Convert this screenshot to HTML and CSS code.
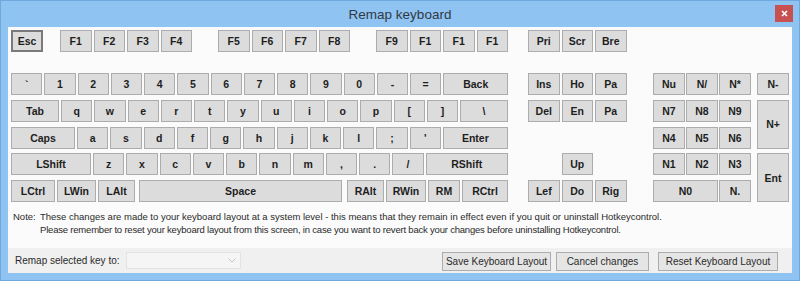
FILE: index.html
```html
<!DOCTYPE html>
<html lang="en">
<head>
  <meta charset="UTF-8">
  <title>Remap keyboard</title>
  <link rel="stylesheet" href="styles.css">
</head>
<body>
  <div class="window">
    <div class="titlebar">
      <span class="titlebar__text">Remap keyboard</span>
      <span class="titlebar__close">
        <svg width="7" height="7" viewBox="0 0 7 7"><path d="M1 1 L6 6 M6 1 L1 6" stroke="#fff" stroke-width="1.6"/></svg>
      </span>
    </div>

    <div class="content">
      <!-- Function keys -->
      <div class="fn-row">
        <div class="key key--focus">Esc</div>
        <div class="key key--fn key--gap-first">F1</div>
        <div class="key key--fn">F2</div>
        <div class="key key--fn">F3</div>
        <div class="key key--fn">F4</div>
        <div class="key key--fn key--gap-group">F5</div>
        <div class="key key--fn">F6</div>
        <div class="key key--fn">F7</div>
        <div class="key key--fn">F8</div>
        <div class="key key--fn key--gap-group">F9</div>
        <div class="key key--fn">F1</div>
        <div class="key key--fn">F1</div>
        <div class="key key--fn">F1</div>
        <div class="key key--fn key--gap-sys">Pri</div>
        <div class="key key--fn">Scr</div>
        <div class="key key--fn">Bre</div>
      </div>

      <div class="board">
        <!-- Main block -->
        <div class="block block--main">
          <div class="row">
            <div class="key">`</div>
            <div class="key">1</div>
            <div class="key">2</div>
            <div class="key">3</div>
            <div class="key">4</div>
            <div class="key">5</div>
            <div class="key">6</div>
            <div class="key">7</div>
            <div class="key">8</div>
            <div class="key">9</div>
            <div class="key">0</div>
            <div class="key">-</div>
            <div class="key">=</div>
            <div class="key key--back">Back</div>
          </div>
          <div class="row">
            <div class="key key--tab">Tab</div>
            <div class="key">q</div>
            <div class="key">w</div>
            <div class="key">e</div>
            <div class="key">r</div>
            <div class="key">t</div>
            <div class="key">y</div>
            <div class="key">u</div>
            <div class="key">i</div>
            <div class="key">o</div>
            <div class="key">p</div>
            <div class="key">[</div>
            <div class="key">]</div>
            <div class="key key--fill">\</div>
          </div>
          <div class="row">
            <div class="key key--caps">Caps</div>
            <div class="key">a</div>
            <div class="key">s</div>
            <div class="key">d</div>
            <div class="key">f</div>
            <div class="key">g</div>
            <div class="key">h</div>
            <div class="key">j</div>
            <div class="key">k</div>
            <div class="key">l</div>
            <div class="key">;</div>
            <div class="key">'</div>
            <div class="key key--fill">Enter</div>
          </div>
          <div class="row">
            <div class="key key--lshift">LShift</div>
            <div class="key">z</div>
            <div class="key">x</div>
            <div class="key">c</div>
            <div class="key">v</div>
            <div class="key">b</div>
            <div class="key">n</div>
            <div class="key">m</div>
            <div class="key">,</div>
            <div class="key">.</div>
            <div class="key">/</div>
            <div class="key key--fill">RShift</div>
          </div>
          <div class="row row--bottom">
            <div class="key key--lctrl">LCtrl</div>
            <div class="key key--lwin">LWin</div>
            <div class="key key--lalt">LAlt</div>
            <div class="key key--space">Space</div>
            <div class="key key--ralt">RAlt</div>
            <div class="key key--rwin">RWin</div>
            <div class="key key--rm">RM</div>
            <div class="key key--fill">RCtrl</div>
          </div>
        </div>

        <!-- Navigation block -->
        <div class="block block--nav">
          <div class="row">
            <div class="key key--nav">Ins</div>
            <div class="key key--nav">Ho</div>
            <div class="key key--nav">Pa</div>
          </div>
          <div class="row">
            <div class="key key--nav">Del</div>
            <div class="key key--nav">En</div>
            <div class="key key--nav">Pa</div>
          </div>
          <div class="row"></div>
          <div class="row">
            <div class="key key--nav key--up">Up</div>
          </div>
          <div class="row">
            <div class="key key--nav">Lef</div>
            <div class="key key--nav">Do</div>
            <div class="key key--nav">Rig</div>
          </div>
        </div>

        <!-- Numpad -->
        <div class="numpad">
          <div class="key">Nu</div>
          <div class="key">N/</div>
          <div class="key">N*</div>
          <div class="key">N7</div>
          <div class="key">N8</div>
          <div class="key">N9</div>
          <div class="key">N4</div>
          <div class="key">N5</div>
          <div class="key">N6</div>
          <div class="key">N1</div>
          <div class="key">N2</div>
          <div class="key">N3</div>
          <div class="key key--wide">N0</div>
          <div class="key">N.</div>
        </div>
        <div class="numpad-ops">
          <div class="key">N-</div>
          <div class="key key--tall">N+</div>
          <div class="key key--tall">Ent</div>
        </div>
      </div>

      <div class="note">
        <span class="note__label">Note:</span>
        <div class="note__text">
          <p>These changes are made to your keyboard layout at a system level - this means that they remain in effect even if you quit or uninstall Hotkeycontrol.</p>
          <p class="note__second">Please remember to reset your keyboard layout from this screen, in case you want to revert back your changes before uninstalling Hotkeycontrol.</p>
        </div>
      </div>
    </div>

    <div class="footer">
      <span class="footer__label">Remap selected key to:</span>
      <div class="combo">
        <svg width="8" height="5" viewBox="0 0 8 5"><path d="M0.5 0.5 L4 4 L7.5 0.5" fill="none" stroke="#c4c4c4" stroke-width="1"/></svg>
      </div>
      <div class="btn btn--save">Save Keyboard Layout</div>
      <div class="btn btn--cancel">Cancel changes</div>
      <div class="btn btn--reset">Reset Keyboard Layout</div>
    </div>
  </div>
</body>
</html>
```

FILE: styles.css
```css
/* Reset */
*, *::after, *::before {
  margin: 0;
  padding: 0;
  box-sizing: border-box;
}

body {
  background-color: #8fc3f2;
  font-family: "Liberation Sans", Arial, sans-serif;
  color: #222;
}

.window {
  height: 281px;
  display: flex;
  flex-direction: column;
  border: 1px solid #6fa8dc;
  background-color: #8fc3f2;
}

/* Title bar */
.titlebar {
  height: 26px;
  position: relative;
  display: flex;
  align-items: center;
  justify-content: center;
}

.titlebar__text {
  font-size: 13.5px;
  color: #2f3a45;
  padding-top: 1px;
}

.titlebar__close {
  position: absolute;
  top: 4px;
  right: 6px;
  width: 18px;
  height: 17px;
  background-color: #c75050;
  display: flex;
  align-items: center;
  justify-content: center;
}

/* Content */
.content {
  flex: 1;
  margin: 0 7px;
  padding: 3px 0 0 3px;
  background-color: #fbfbfb;
}

.key {
  width: 31.25px;
  height: 22px;
  flex: none;
  display: flex;
  align-items: center;
  justify-content: center;
  background-color: #dcdcdc;
  border: 1px solid #acacac;
  font-size: 10.5px;
  font-weight: bold;
  color: #1e1e1e;
}

.key--focus {
  width: 32px;
  border: 2px solid #7a7a7a;
}

.fn-row {
  display: flex;
  gap: 2px;
}

.key--fn {
  width: 31.5px;
}

.key--gap-first {
  margin-left: 15px;
}

.key--gap-group {
  margin-left: 24px;
}

.key--gap-sys {
  margin-left: 18px;
}

.board {
  display: flex;
  margin-top: 21px;
}

.block {
  display: flex;
  flex-direction: column;
  gap: 4.75px;
}

.block--main {
  width: 497px;
}

.row {
  display: flex;
  gap: 2px;
  height: 22px;
}

.key--back {
  width: 65px;
}

.key--tab {
  width: 48px;
}

.key--caps {
  width: 64px;
}

.key--lshift {
  width: 80px;
}

.key--fill {
  flex: 1;
}

.row--bottom {
  gap: 0;
}

.key--lctrl {
  width: 44px;
}

.key--lwin {
  width: 39px;
  margin-left: 2px;
}

.key--lalt {
  width: 37px;
  margin-left: 2px;
}

.key--space {
  width: 203px;
  margin-left: 4px;
}

.key--ralt {
  width: 37px;
  margin-left: 5px;
}

.key--rwin {
  width: 40px;
  margin-left: 2px;
}

.key--rm {
  width: 32px;
  margin-left: 2px;
}

.row--bottom .key--fill {
  margin-left: 2px;
}

.block--nav {
  margin-left: 20px;
}

.key--nav {
  width: 31.5px;
}

.key--up {
  margin-left: 33.5px;
}

.numpad {
  margin-left: 26.5px;
  display: grid;
  grid-template-columns: repeat(3, 32px);
  grid-template-rows: repeat(5, 22px);
  column-gap: 1px;
  row-gap: 4.75px;
}

.numpad .key {
  width: auto;
}

.key--wide {
  grid-column: span 2;
}

.numpad-ops {
  margin-left: 6px;
  display: grid;
  grid-template-columns: 32px;
  grid-template-rows: repeat(5, 22px);
  row-gap: 4.75px;
}

.numpad-ops .key {
  width: auto;
}

.key--tall {
  grid-row: span 2;
  height: auto;
}

/* Note */
.note {
  display: flex;
  margin-top: 9px;
  padding-left: 2px;
  font-size: 9.5px;
  line-height: 12.5px;
  color: #2a2a2a;
}

.note__label {
  width: 27px;
}

.note__second {
  letter-spacing: -0.2px;
}

/* Footer */
.footer {
  height: 25px;
  margin: 0 7px 7px;
  padding-left: 7px;
  display: flex;
  align-items: center;
  background-color: #f0f0f0;
  font-size: 10px;
  color: #2a2a2a;
}

.footer__label {
  width: 111px;
}

.combo {
  width: 115px;
  height: 17px;
  border: 1px solid #e3e3e3;
  background-color: #f5f5f5;
  display: flex;
  align-items: center;
  justify-content: flex-end;
  padding-right: 4px;
}

.btn {
  height: 19px;
  margin-top: 1px;
  display: flex;
  align-items: center;
  justify-content: center;
  background-color: #e5e5e5;
  border: 1px solid #acacac;
}

.btn--save {
  width: 109px;
  margin-left: 201px;
}

.btn--cancel {
  width: 93px;
  margin-left: 5px;
}

.btn--reset {
  width: 120px;
  margin-left: 9px;
}
```
